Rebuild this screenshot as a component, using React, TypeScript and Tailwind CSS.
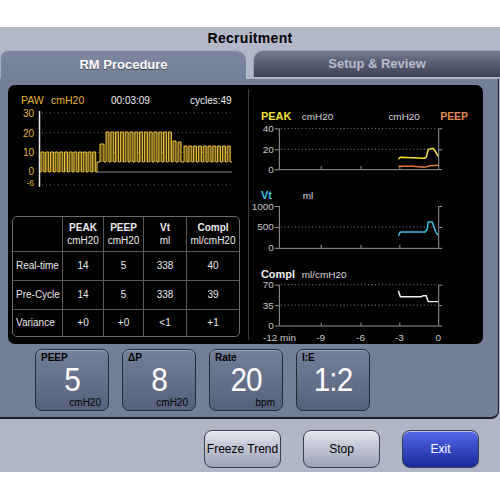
import React from "react";

type Pulse = { x: number; w: number; peak: number; base: number };

// square-wave pulses of the PAW curve, in page coordinates
function buildPulses(): Pulse[] {
  const list: Pulse[] = [];
  for (let i = 0; i < 12; i++) list.push({ x: 41 + i * 4.7, w: 3, peak: 153, base: 173 });
  list.push({ x: 100, w: 4, peak: 145, base: 163 });
  for (let i = 0; i < 14; i++) list.push({ x: 106 + i * 4.8, w: 3, peak: 133, base: 163 });
  list.push({ x: 173, w: 3, peak: 142, base: 163 });
  list.push({ x: 178, w: 3, peak: 143, base: 163 });
  for (let i = 0; i < 10; i++) list.push({ x: 184 + i * 4.8, w: 3, peak: 147, base: 163 });
  return list;
}

function PawChart() {
  const pulses = buildPulses();
  let d = "M40 173";
  pulses.forEach((p, i) => {
    if (i === 12) d += " L97 173 L97 163";
    d += ` L${p.x} ${p.base} L${p.x} ${p.peak} L${p.x + p.w} ${p.peak} L${p.x + p.w} ${p.base}`;
  });
  d += " L232 163";
  const grid = [114, 134, 153.5, 186];
  return (
    <svg width="240" height="125" viewBox="8 86 240 125" className="block">
      <text x="21" y="105" fill="#e4b336" fontSize="10.5">PAW</text>
      <text x="51" y="105" fill="#e4b336" fontSize="10.5">cmH20</text>
      <text x="111" y="105" fill="#f0f0f0" fontSize="10">00:03:09</text>
      <text x="190" y="105" fill="#f0f0f0" fontSize="10">cycles:49</text>
      {[["30", 118, 10], ["20", 137.5, 10], ["10", 157, 10], ["0", 175.5, 10], ["-6", 187, 8.5]].map(([t, y, s]) => (
        <text key={t} x="34" y={y} fill="#e4b336" fontSize={s} textAnchor="end">{t}</text>
      ))}
      {grid.map((y) => (
        <line key={y} x1="42" x2="232" y1={y} y2={y} stroke="#6a6a6a" strokeWidth="1" strokeDasharray="1 3" />
      ))}
      <line x1="97" x2="232" y1="173" y2="173" stroke="#8a8a8a" strokeWidth="1" />
      <line x1="39.5" x2="39.5" y1="112" y2="188" stroke="#e8e8e8" strokeWidth="1.5" />
      {pulses.map((p, i) => (
        <rect key={i} x={p.x} y={p.peak} width={p.w} height={p.base - p.peak} fill="#5e4d14" />
      ))}
      <path d={d} fill="none" stroke="#f2c53c" strokeWidth="1" />
    </svg>
  );
}

const rows = [
  ["Real-time", "14", "5", "338", "40"],
  ["Pre-Cycle", "14", "5", "338", "39"],
  ["Variance", "+0", "+0", "<1", "+1"],
];
const heads = [
  ["PEAK", "cmH20"],
  ["PEEP", "cmH20"],
  ["Vt", "ml"],
  ["Compl", "ml/cmH20"],
];

function ResultTable() {
  return (
    <div className="ml-[4px] mt-[6px] w-[228px] rounded-[5px] border border-[#6b6b6b] overflow-hidden text-[10px] text-[#ececec] leading-none">
      <div className="grid grid-cols-[50px_41px_40px_43px_52px] grid-rows-[35px_29px_29px_26px]">
        <div className="border-r border-b border-[#5a5a5a]" />
        {heads.map(([a, b], i) => (
          <div key={a} className={`flex flex-col items-center justify-center gap-[3px] border-b border-[#5a5a5a] ${i < 3 ? "border-r" : ""}`}>
            <span className="font-bold">{a}</span>
            <span>{b}</span>
          </div>
        ))}
        {rows.map((r, ri) =>
          r.map((c, ci) => (
            <div
              key={`${ri}-${ci}`}
              className={`flex items-center border-[#5a5a5a] ${ci === 0 ? "justify-start pl-[3px]" : "justify-center"} ${ci < 4 ? "border-r" : ""} ${ri < 2 ? "border-b" : ""}`}
            >
              {c}
            </div>
          ))
        )}
      </div>
    </div>
  );
}

function Axis({ top, bottom, ticks, grid }: { top: number; bottom: number; ticks: [string, number][]; grid: number[] }) {
  return (
    <g>
      {grid.map((y) => (
        <line key={y} x1="280" x2="437" y1={y} y2={y} stroke="#8a8a8a" strokeWidth="1" strokeDasharray="1 2.5" />
      ))}
      <line x1="278.5" x2="278.5" y1={top} y2={bottom} stroke="#9a9a9a" />
      <line x1="438.5" x2="438.5" y1={top} y2={bottom} stroke="#9a9a9a" />
      <line x1="278" x2="439" y1={bottom + 0.5} y2={bottom + 0.5} stroke="#9a9a9a" />
      {ticks.map(([t, y]) => (
        <g key={t}>
          <line x1="274" x2="278" y1={y + 0.5} y2={y + 0.5} stroke="#9a9a9a" />
          <line x1="439" x2="442" y1={y + 0.5} y2={y + 0.5} stroke="#9a9a9a" />
          <text x="273" y={y + 3.5} fill="#c9c9c9" fontSize="10" textAnchor="end">{t}</text>
        </g>
      ))}
      {[320, 360, 399].map((x) => (
        <line key={x} x1={x + 0.5} x2={x + 0.5} y1={bottom - 3} y2={bottom} stroke="#9a9a9a" />
      ))}
    </g>
  );
}

function TrendCharts() {
  return (
    <svg width="235" height="259" viewBox="248 86 235 259" className="block">
      <text x="260" y="121" fill="#f2e23a" fontSize="11" fontWeight="bold">PEAK</text>
      <text x="301" y="121" fill="#d8d8d8" fontSize="10">cmH20</text>
      <text x="388" y="121" fill="#d8d8d8" fontSize="10">cmH20</text>
      <text x="440" y="121" fill="#e3894e" fontSize="10.5" fontWeight="bold">PEEP</text>
      <Axis top={129} bottom={170} ticks={[["40", 129], ["20", 150], ["0", 170]]} grid={[129, 150]} />
      <polyline
        points="398,160 400,158 424,159 426,158 428,150 433,149 435,152 438,157"
        fill="none" stroke="#f4e23c" strokeWidth="1.5"
      />
      <polyline
        points="398,167 412,167 418,167.5 424,168 430,166.5 438,166"
        fill="none" stroke="#d9793a" strokeWidth="1.5"
      />

      <text x="260" y="200" fill="#3fc3ea" fontSize="11" fontWeight="bold">Vt</text>
      <text x="302" y="200" fill="#d8d8d8" fontSize="10">ml</text>
      <Axis top={207} bottom={249} ticks={[["1000", 207], ["500", 228], ["0", 249]]} grid={[228]} />
      <polyline
        points="398,237 400,233 425,233 427,230 428,223 432,223 434,229 436,234 438,236"
        fill="none" stroke="#3fc3ea" strokeWidth="1.5"
      />

      <text x="260" y="279" fill="#f2f2f2" fontSize="11" fontWeight="bold">Compl</text>
      <text x="301" y="279" fill="#d8d8d8" fontSize="10">ml/cmH20</text>
      <Axis top={286} bottom={327} ticks={[["70", 286], ["35", 306.5], ["0", 327]]} grid={[286, 306.5]} />
      <polyline
        points="398,292 400,298 421,298 423,297 426,297 428,303 438,303"
        fill="none" stroke="#f2f2f2" strokeWidth="1.5"
      />
      <text x="262" y="343" fill="#c9c9c9" fontSize="10">-12 min</text>
      <text x="320" y="343" fill="#c9c9c9" fontSize="10" textAnchor="middle">-9</text>
      <text x="360" y="343" fill="#c9c9c9" fontSize="10" textAnchor="middle">-6</text>
      <text x="399" y="343" fill="#c9c9c9" fontSize="10" textAnchor="middle">-3</text>
      <text x="438" y="343" fill="#c9c9c9" fontSize="10" textAnchor="middle">0</text>
    </svg>
  );
}

const params = [
  { label: "PEEP", value: "5", unit: "cmH20" },
  { label: "ΔP", value: "8", unit: "cmH20" },
  { label: "Rate", value: "20", unit: "bpm" },
  { label: "I:E", value: "1:2", unit: "" },
];

function ParamBox({ label, value, unit }: { label: string; value: string; unit: string }) {
  return (
    <div className="w-[74px] h-[62px] rounded-[7px] border-[1.5px] border-[#262a36] bg-gradient-to-b from-[#74809a] to-[#56607a] shadow-[inset_0_1px_0_#98a2b8] flex flex-col px-[5px] pt-[2px] pb-[2px]">
      <div className="text-[10px] font-bold text-black leading-[11px]">{label}</div>
      <div className="flex-1 flex items-center justify-center text-[33px] leading-none text-white tracking-[-1px] -mt-[1px] scale-x-[0.9]">{value}</div>
      <div className="h-[11px] text-[10px] leading-[11px] text-black text-right pr-[2px]">{unit}</div>
    </div>
  );
}

function Btn({ children, blue }: { children: React.ReactNode; blue?: boolean }) {
  return (
    <button
      className={`w-[77px] h-[38px] rounded-[8px] border border-[#3a3f50] text-[12px] shadow-[inset_0_1px_0_rgba(255,255,255,0.6)] ${
        blue
          ? "bg-gradient-to-b from-[#5568ea] to-[#1b2a9c] text-white"
          : "bg-gradient-to-b from-[#e2e5ee] to-[#9ba1b5] text-black"
      }`}
    >
      {children}
    </button>
  );
}

export default function App() {
  return (
    <div className="w-[500px] h-[500px] bg-white flex flex-col font-['Liberation_Sans',Arial,sans-serif] overflow-hidden">
      <div className="h-[27px] shrink-0" />
      <div className="h-[23px] shrink-0 bg-[#b3b8c9] flex items-center justify-center">
        <span className="text-[14px] font-bold text-black tracking-[0.3px]">Recruitment</span>
      </div>
      <div className="h-[29px] shrink-0 bg-[#b3b8c9] flex items-start">
        <div className="w-[246px] h-[29px] rounded-tl-[8px] rounded-tr-[10px] bg-gradient-to-b from-[#7d88a0] to-[#737e97] border-t border-l border-[#a6adc0] flex items-center justify-center">
          <span className="text-[13px] font-bold text-white [text-shadow:0_1px_0_#3a4050]">RM Procedure</span>
        </div>
        <div className="ml-[7px] flex-1 h-[27px] rounded-tl-[10px] bg-gradient-to-b from-[#747a8f] to-[#3d4254] border-t border-l border-[#9aa0b4] flex items-center justify-center">
          <span className="text-[13px] font-bold text-[#b9bdca]">Setup &amp; Review</span>
        </div>
      </div>
      <div className="h-[340px] shrink-0 bg-[#b1b6c7]">
        <div className="h-[340px] w-[499px] bg-[#737e97] rounded-br-[8px] border-b-2 border-r border-[#1c1f28] pt-[6px] pl-[8px] flex flex-col">
          <div className="w-[475px] h-[259px] bg-black rounded-[7px] flex">
            <div className="w-[240px] flex flex-col">
              <PawChart />
              <ResultTable />
            </div>
            <div className="w-px my-[4px] bg-[#3c3c3c]" />
            <TrendCharts />
          </div>
          <div className="flex gap-[13px] mt-[5px] ml-[27px]">
            {params.map((p) => (
              <ParamBox key={p.label} {...p} />
            ))}
          </div>
        </div>
      </div>
      <div className="h-[53px] shrink-0 bg-[#b1b6c7] flex items-start justify-end gap-[22px] pt-[11px] pr-[21px]">
        <Btn>Freeze Trend</Btn>
        <Btn>Stop</Btn>
        <Btn blue>Exit</Btn>
      </div>
    </div>
  );
}
